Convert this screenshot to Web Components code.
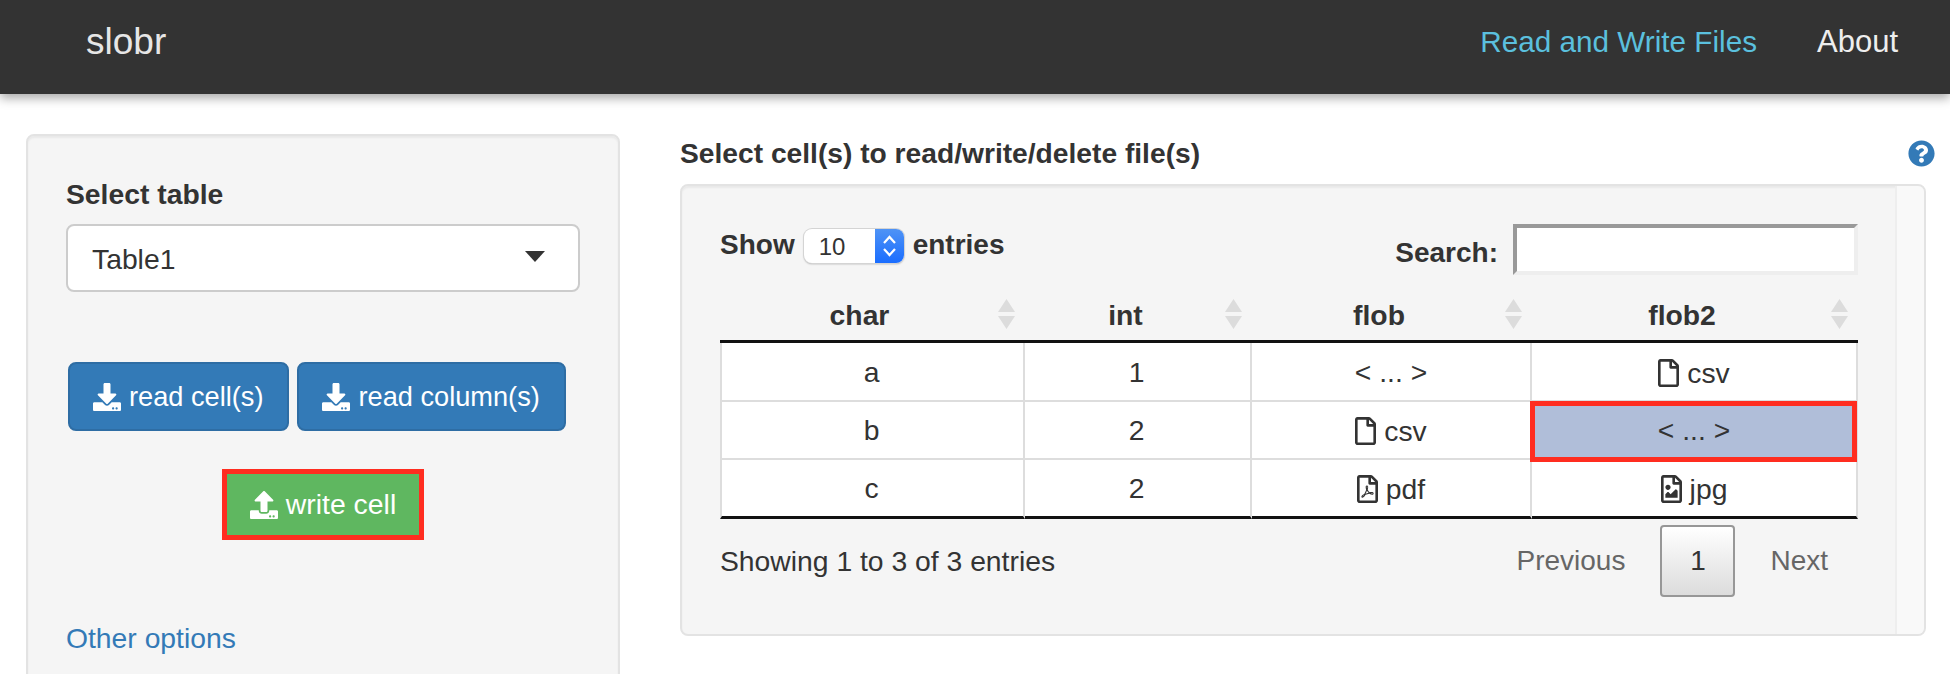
<!DOCTYPE html>
<html lang="en">
<head>
<meta charset="utf-8">
<title>slobr</title>
<style>
html,body{margin:0;padding:0;background:#fff;height:674px;overflow:hidden}
body{font:28.3px/40px "Liberation Sans",Arial,sans-serif;color:#333}
</style>
</head>
<body>
<slobr-app></slobr-app>
<script>
const PATHS={
download:['0 0 512 512','M216 0h80c13.3 0 24 10.7 24 24v168h87.7c17.8 0 26.7 21.5 14.1 34.1L269.7 378.3c-7.5 7.5-19.8 7.5-27.3 0L90.1 226.1c-12.6-12.6-3.7-34.1 14.1-34.1H192V24c0-13.3 10.7-24 24-24zm296 376v112c0 13.3-10.7 24-24 24H24c-13.3 0-24-10.7-24-24V376c0-13.3 10.7-24 24-24h146.7l49 49c20.1 20.1 52.5 20.1 72.6 0l49-49H488c13.3 0 24 10.7 24 24zm-124 88c0-11-9-20-20-20s-20 9-20 20 9 20 20 20 20-9 20-20zm64 0c0-11-9-20-20-20s-20 9-20 20 9 20 20 20 20-9 20-20z'],
upload:['0 0 512 512','M296 384h-80c-13.3 0-24-10.7-24-24V192h-87.7c-17.8 0-26.7-21.5-14.1-34.1L242.3 5.7c7.5-7.5 19.8-7.5 27.3 0l152.2 152.2c12.6 12.6 3.7 34.1-14.1 34.1H320v168c0 13.3-10.7 24-24 24zm216-8v112c0 13.3-10.7 24-24 24H24c-13.3 0-24-10.7-24-24V376c0-13.3 10.7-24 24-24h136v8c0 30.9 25.1 56 56 56h80c30.9 0 56-25.1 56-56v-8h136c13.3 0 24 10.7 24 24zm-124 88c0-11-9-20-20-20s-20 9-20 20 9 20 20 20 20-9 20-20zm64 0c0-11-9-20-20-20s-20 9-20 20 9 20 20 20 20-9 20-20z'],
question:['0 0 512 512','M504 256c0 136.997-111.043 248-248 248S8 392.997 8 256C8 119.083 119.043 8 256 8s248 111.083 248 248zM262.655 90c-54.497 0-89.255 22.957-116.549 63.758-3.536 5.286-2.353 12.415 2.715 16.258l34.699 26.31c5.205 3.947 12.621 3.008 16.665-2.122 17.864-22.658 30.113-35.797 57.303-35.797 20.429 0 45.698 13.148 45.698 32.958 0 14.976-12.363 22.667-32.534 33.976C247.128 238.528 216 254.941 216 296v4c0 6.627 5.373 12 12 12h56c6.627 0 12-5.373 12-12v-1.333c0-28.462 83.186-29.647 83.186-106.667 0-58.002-60.165-102-116.531-102zM256 338c-25.365 0-46 20.635-46 46 0 25.364 20.635 46 46 46s46-20.636 46-46c0-25.365-20.635-46-46-46z'],
file:['0 0 384 512','M369.9 97.9L286 14C277 5 264.8-.1 252.1-.1H48C21.5 0 0 21.5 0 48v416c0 26.5 21.5 48 48 48h288c26.5 0 48-21.5 48-48V131.9c0-12.7-5.1-25-14.1-34zM332.1 128H256V51.9l76.1 76.1zM48 464V48h160v104c0 13.3 10.7 24 24 24h104v288H48z'],
pdf:['0 0 384 512','M369.9 97.9L286 14C277 5 264.8-.1 252.1-.1H48C21.5 0 0 21.5 0 48v416c0 26.5 21.5 48 48 48h288c26.5 0 48-21.5 48-48V131.9c0-12.7-5.1-25-14.1-34zM332.1 128H256V51.9l76.1 76.1zM48 464V48h160v104c0 13.3 10.7 24 24 24h104v288H48zm250.2-143.7c-12.2-12-47-8.7-64.4-6.5-17.2-10.5-28.7-25-36.8-46.3 3.9-16.1 10.1-40.6 5.4-56-4.2-26.2-37.8-23.6-42.6-5.9-4.4 16.1-.4 38.5 7 67.1-10 23.9-24.9 56-35.4 74.4-20 10.3-47 26.2-51 46.2-3.3 15.8 26 55.2 76.1-31.2 22.4-7.4 46.8-16.5 68.4-20.1 18.9 10.2 41 17 55.8 17 25.5 0 28-28.2 17.5-38.7zm-198.1 77.8c5.1-13.7 24.5-29.5 30.4-35-19 30.3-30.4 35.7-30.4 35zm81.6-190.6c7.4 0 6.7 32.1 1.8 40.8-4.4-13.9-4.3-40.8-1.8-40.8zm-24.4 136.6c9.7-16.9 18-37 24.7-54.7 8.3 15.1 18.9 27.2 30.1 35.5-20.8 4.3-38.9 13.1-54.8 19.2zm131.6-5s-5 6-37.3-7.8c35.1-2.6 40.9 5.4 37.3 7.8z'],
image:['0 0 384 512','M369.9 97.9L286 14C277 5 264.8-.1 252.1-.1H48C21.5 0 0 21.5 0 48v416c0 26.5 21.5 48 48 48h288c26.5 0 48-21.5 48-48V131.9c0-12.7-5.1-25-14.1-34zM332.1 128H256V51.9l76.1 76.1zM48 464V48h160v104c0 13.3 10.7 24 24 24h104v288H48zm32-48h224V288l-23.5-23.5c-4.7-4.7-12.3-4.7-17 0L176 352l-39.5-39.5c-4.7-4.7-12.3-4.7-17 0L80 352v64zm48-240c-26.5 0-48 21.5-48 48s21.5 48 48 48 48-21.5 48-48-21.5-48-48-48z']
};
function def(name,html,init){
  const t=document.createElement('template');t.innerHTML=html;
  customElements.define(name,class extends HTMLElement{
    constructor(){super();this.attachShadow({mode:'open'}).appendChild(t.content.cloneNode(true));}
    connectedCallback(){if(init)init(this);}
  });
}
def('fa-icon',`<style>:host{display:inline-flex;line-height:0;flex:none}svg{display:block;height:var(--h,28px);fill:currentColor}</style><svg><path/></svg>`,el=>{
  const [vb,d]=PATHS[el.getAttribute('name')];
  const s=el.shadowRoot.querySelector('svg');s.setAttribute('viewBox',vb);s.querySelector('path').setAttribute('d',d);
});
def('top-nav',`<style>
:host{display:flex;align-items:center;justify-content:space-between;height:94px;box-sizing:border-box;padding:0 52px 10px 86px;background:#333;box-shadow:0 4px 10px rgba(0,0,0,.35);position:relative;z-index:1}
.brand{font-size:37px;color:#e6e6e6}
nav{display:flex;gap:60px;font-size:29.7px}
.on{color:#5bc0de}.off{color:#eee;font-size:31px}
</style><div class="brand">slobr</div><nav><span class="on">Read and Write Files</span><span class="off">About</span></nav>`);
def('action-button',`<style>
:host{display:inline-flex;align-items:center;gap:8px;height:69px;box-sizing:border-box;padding:0 24px 0 23px;color:#fff;background:#337ab7;border:2px solid #2e6da4;border-radius:8px;font-size:27.2px;line-height:1;white-space:nowrap}
:host([kind=write]){background:#5fb760;border:5px solid #ff2d20;border-radius:0;height:71px;padding:0 23px;font-size:28.4px}
</style><slot></slot>`);
def('side-panel',`<style>
:host{display:block;box-sizing:border-box;width:594px;height:620px;flex:none;padding:38px;background:#f5f5f5;border:2px solid #e3e3e3;border-radius:8px;box-shadow:inset 0 2px 2px rgba(0,0,0,.05)}
label{display:block;font-weight:700;margin-bottom:10px}
.select{display:flex;align-items:center;justify-content:space-between;height:68px;box-sizing:border-box;padding:1px 33px 0 24px;background:#fff;border:2px solid #ccc;border-radius:8px}
.caret{width:0;height:0;border:10px solid transparent;border-top:11px solid #333;border-bottom:0;margin-bottom:5px}
.reads{display:flex;gap:8px;margin:70px 0 0 2px}
.write{display:flex;justify-content:center;margin-top:38px}
a{display:block;margin-top:78px;color:#337ab7;text-decoration:none}
</style>
<label>Select table</label>
<div class="select"><span>Table1</span><span class="caret"></span></div>
<div class="reads">
<action-button><fa-icon name="download"></fa-icon><span>read cell(s)</span></action-button>
<action-button><fa-icon name="download"></fa-icon><span>read column(s)</span></action-button>
</div>
<div class="write"><action-button kind="write"><fa-icon name="upload"></fa-icon><span>write cell</span></action-button></div>
<a href="#">Other options</a>`);
def('sort-arrows',`<style>:host{display:block;line-height:0}svg{display:block}</style><svg width="17" height="30" viewBox="0 0 17 30"><path d="M8.5 0L17 13H0zM8.5 30L0 17h17z" fill="#dcdcdc"/></svg>`);
def('entries-select',`<style>
:host{display:inline-flex;width:100px;height:34px;box-sizing:border-box;border-radius:8px;overflow:hidden;box-shadow:0 0 0 1px #d4d4d4,0 1px 2px rgba(0,0,0,.35);background:#fff;margin:5px 9px 0 9px;font-size:24px;line-height:36px}
.v{flex:1;padding-left:15px}
.b{width:29px;background:linear-gradient(#4f93f5,#1a6dff);display:flex;align-items:center;justify-content:center}
</style><span class="v">10</span><span class="b"><svg width="15" height="24" viewBox="0 0 15 24" fill="none" stroke="#fff" stroke-width="2.2"><path d="M2 9l5.500-6L13 9M2 15l5.500 6L13 15"/></svg></span>`);
def('data-table',`<style>
:host{display:block}
table{border-collapse:separate;border-spacing:0;table-layout:fixed;width:1138px}
th{height:68px;box-sizing:border-box;padding:14px 0 0;font-weight:700;border-bottom:3px solid #111;position:relative;text-align:center}
th span{display:block;padding-right:26px}
sort-arrows{position:absolute;top:24px;right:10px}
td{height:58px;box-sizing:border-box;background:#fff;text-align:center;padding:0;border-right:2px solid #ddd;border-top:2px solid #ddd;position:relative}
td:nth-child(-n+2){padding-right:2px}
tbody tr:first-child td{border-top:0;height:57px}
td:first-child{border-left:2px solid #ddd}
tbody tr:last-child td{border-bottom:3px solid #111;height:61px}
td.sel{background:#b0bed9;z-index:1}
td.sel::after{content:"";position:absolute;left:-2px;right:-1px;top:-1px;bottom:-4px;border:5px solid #ff2d20;box-sizing:border-box;pointer-events:none}
.f{display:inline-flex;align-items:center;gap:8px;vertical-align:middle}
.f fa-icon{--h:28px;color:#333}
</style>
<table>
<colgroup><col style="width:305px"><col style="width:227px"><col style="width:280px"><col style="width:326px"></colgroup>
<thead><tr>
<th><span>char</span><sort-arrows></sort-arrows></th>
<th><span>int</span><sort-arrows></sort-arrows></th>
<th><span>flob</span><sort-arrows></sort-arrows></th>
<th><span>flob2</span><sort-arrows></sort-arrows></th>
</tr></thead>
<tbody>
<tr><td>a</td><td>1</td><td>&lt; ... &gt;</td><td><span class="f"><fa-icon name="file"></fa-icon><span>csv</span></span></td></tr>
<tr><td>b</td><td>2</td><td><span class="f"><fa-icon name="file"></fa-icon><span>csv</span></span></td><td class="sel">&lt; ... &gt;</td></tr>
<tr><td>c</td><td>2</td><td><span class="f"><fa-icon name="pdf"></fa-icon><span>pdf</span></span></td><td><span class="f"><fa-icon name="image"></fa-icon><span>jpg</span></span></td></tr>
</tbody>
</table>`);
def('page-nav',`<style>
:host{display:flex;align-items:center;color:#666;font-size:28px}
.t{padding:0 35px}
.t.n{padding:0 30px 0 35px}
.c{display:flex;align-items:center;justify-content:center;width:75px;height:72px;box-sizing:border-box;border:2px solid #979797;border-radius:4px;background:linear-gradient(#fff,#dcdcdc);color:#333}
</style><span class="t">Previous</span><span class="c">1</span><span class="t n">Next</span>`);
def('table-panel',`<style>
:host{display:flex;box-sizing:border-box;width:1246px;background:#f5f5f5;border:2px solid #e3e3e3;border-radius:8px;box-shadow:inset 0 2px 2px rgba(0,0,0,.05);overflow:hidden}
.main{flex:1;padding:38px 37px 37px 38px;min-width:0}
.gutter{width:29px;flex:none;box-sizing:border-box;background:#f9f9f9;border-left:2px solid #eee}
.top{display:flex;justify-content:space-between;height:51px;font-size:28px}
.show{display:flex;align-items:flex-start;font-weight:700;line-height:42px;box-sizing:border-box;height:51px}
.show entries-select{font-weight:400}
.search{display:flex;align-items:flex-end;font-weight:700;line-height:45px;gap:15px}
.input{width:345px;height:51px;box-sizing:border-box;background:#fff;border:4px solid;border-color:#999 #eee #eee #999}
.foot{display:flex;justify-content:space-between;align-items:center;margin-top:6px}
</style>
<div class="main">
<div class="top">
<div class="show"><span>Show</span><entries-select></entries-select><span>entries</span></div>
<div class="search"><span>Search:</span><div class="input"></div></div>
</div>
<data-table></data-table>
<div class="foot"><span>Showing 1 to 3 of 3 entries</span><page-nav></page-nav></div>
</div>
<div class="gutter"></div>`);
def('slobr-app',`<style>
:host{display:block}
main{display:flex;align-items:flex-start;gap:60px;padding:40px 0 0 26px}
.right{width:1247px;flex:none;min-width:0}
.head{display:flex;justify-content:space-between;align-items:flex-start;height:50px}
h2{margin:-1px 0 0;font-size:28.2px;font-weight:700;line-height:40px}
.q{color:#337ab7;--h:27px;margin-right:-8px;margin-top:6px}
</style>
<top-nav></top-nav>
<main>
<side-panel></side-panel>
<section class="right">
<div class="head"><h2>Select cell(s) to read/write/delete file(s)</h2><fa-icon class="q" name="question"></fa-icon></div>
<table-panel></table-panel>
</section>
</main>`);
</script>
</body>
</html>
